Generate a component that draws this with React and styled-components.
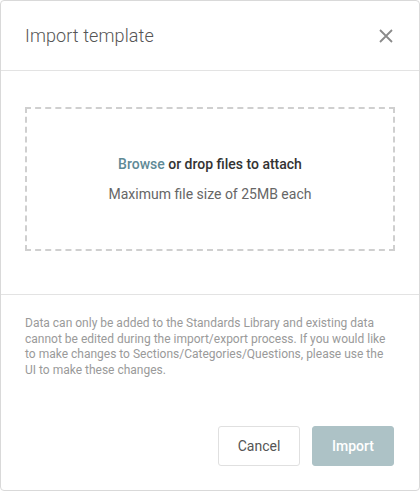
import React from "react";
import styled, { createGlobalStyle } from "styled-components";

const Global = createGlobalStyle`
  html, body { margin: 0; padding: 0; background: #fff; }
  body { font-family: Roboto, "Liberation Sans", sans-serif; }
  * { box-sizing: border-box; }
`;

const Dialog = styled.div`
  width: 420px;
  height: 491px;
  border: 1px solid #d9d9d9;
  border-radius: 4px;
  background: #fff;
  display: flex;
  flex-direction: column;
  overflow: hidden;
`;

const Header = styled.div`
  height: 70px;
  border-bottom: 1px solid #e3e3e3;
  display: flex;
  align-items: center;
  justify-content: space-between;
  padding: 0 25px 0 24px;
  flex-shrink: 0;
`;

const Title = styled.h2`
  margin: 0;
  font-size: 18px;
  font-weight: 300;
  color: #555;
  letter-spacing: 0.1px;
`;

const CloseButton = styled.button`
  border: none;
  background: none;
  padding: 0;
  width: 14px;
  height: 14px;
  display: flex;
  align-items: center;
  justify-content: center;
  cursor: pointer;
  margin-right: 1px;
`;

const Body = styled.div`
  padding: 36px 24px 43px;
  border-bottom: 1px solid #e3e3e3;
  flex-shrink: 0;
`;

const DropZone = styled.div`
  height: 144px;
  border: 2px dashed #cfcfcf;
  display: flex;
  flex-direction: column;
  align-items: center;
  justify-content: center;
  gap: 14px;
`;

const DropLine = styled.div`
  font-size: 14px;
  font-weight: 500;
  color: #333;
`;

const BrowseLink = styled.span`
  color: #5f8a96;
  cursor: pointer;
`;

const Hint = styled.div`
  font-size: 14px;
  color: #666;
`;

const Footer = styled.div`
  flex: 1;
  display: flex;
  flex-direction: column;
  padding: 21px 25px 24px 24px;
`;

const Note = styled.p`
  margin: 0;
  font-size: 12px;
  line-height: 15.5px;
  color: #9a9a9a;
`;

const Actions = styled.div`
  margin-top: auto;
  display: flex;
  justify-content: flex-end;
  gap: 12px;
`;

const Button = styled.button`
  width: 82px;
  height: 40px;
  border-radius: 3px;
  font-family: Roboto, "Liberation Sans", sans-serif;
  font-size: 14px;
  border: 1px solid ${(p) => (p.$primary ? "#adc2c6" : "#e0e0e0")};
  background: ${(p) => (p.$primary ? "#adc2c6" : "#fff")};
  color: ${(p) => (p.$primary ? "#fff" : "#555")};
  font-weight: ${(p) => (p.$primary ? 500 : 400)};
  cursor: pointer;
`;

export default function App() {
  return (
    <>
      <Global />
      <Dialog>
        <Header>
          <Title>Import template</Title>
          <CloseButton aria-label="Close">
            <svg width="14" height="14" viewBox="0 0 14 14">
              <path d="M1 1 L13 13 M13 1 L1 13" stroke="#8a8a8a" strokeWidth="1.8" fill="none" />
            </svg>
          </CloseButton>
        </Header>
        <Body>
          <DropZone>
            <DropLine>
              <BrowseLink>Browse</BrowseLink> or drop files to attach
            </DropLine>
            <Hint>Maximum file size of 25MB each</Hint>
          </DropZone>
        </Body>
        <Footer>
          <Note>
            Data can only be added to the Standards Library and existing data
            cannot be edited during the import/export process. If you would like
            to make changes to Sections/Categories/Questions, please use the
            UI to make these changes.
          </Note>
          <Actions>
            <Button>Cancel</Button>
            <Button $primary>Import</Button>
          </Actions>
        </Footer>
      </Dialog>
    </>
  );
}
